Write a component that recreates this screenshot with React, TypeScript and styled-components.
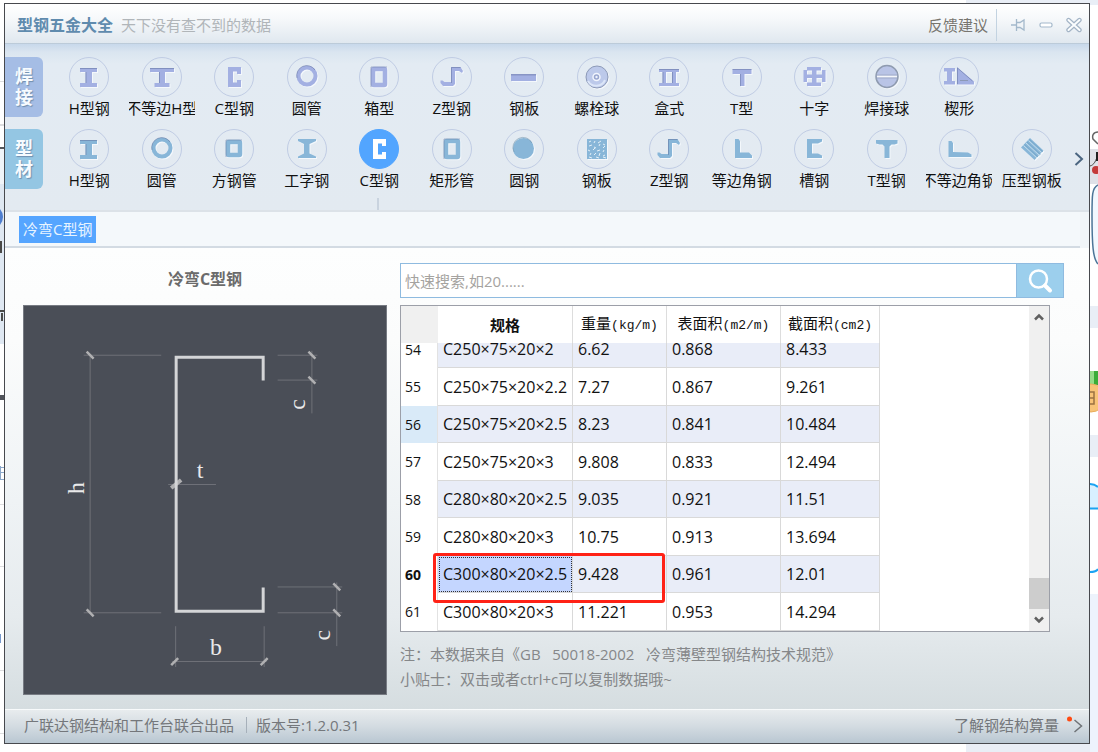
import React, { useLayoutEffect, useRef } from 'react';
import styled, { createGlobalStyle } from 'styled-components';

const GlobalStyle = createGlobalStyle`
  * { box-sizing: border-box; }
  body {
    margin: 0;
    background: #ffffff;
    font-family: "Open Sans", "Noto Sans CJK SC", sans-serif;
    font-size: 15px;
    line-height: 20px;
    color: #111111;
  }
  button, input { font: inherit; color: inherit; margin: 0; }
  button { border: 0; padding: 0; background: none; cursor: pointer; }
  a { color: inherit; text-decoration: none; }
`;

const Desktop = styled.div`
  display: grid;
  grid-template-columns: 4px minmax(0, 1fr) 8px;
  min-height: 100vh;
  background: linear-gradient(90deg, #ffffff 88%, #e9eef6 88%);
`;

const Backdrop = styled.div`
  height: 752px;
  overflow: hidden;
  svg { display: block; }
`;

const Center = styled.div`
  display: flex;
  flex-direction: column;
  padding: 3px 0 8px;
`;

const Window = styled.main`
  flex: 1;
  display: flex;
  flex-direction: column;
  border: 1px solid #47494e;
  background: #f1f5f8;
`;

const TitleBar = styled.header`
  display: flex;
  align-items: center;
  height: 40px;
  padding: 3px 3px 0 12px;
  background: linear-gradient(#ffffff, #f7f9fb 35%, #e0e8ef);
  border-bottom: 1px solid #bccbd9;
`;

const AppName = styled.h1`
  margin: 0 8px 0 0;
  font-size: 16px;
  line-height: 20px;
  font-weight: 700;
  color: #5f8bae;
`;

const Slogan = styled.span`
  flex: 1;
  color: #b0b5b9;
`;

const Feedback = styled.a`
  color: #77756f;
  padding-right: 8px;
`;

const WindowControls = styled.div`
  display: flex;
  align-items: center;
  height: 32px;
  gap: 4px;
  padding-left: 9px;
  border-left: 1px solid #c3d3e1;
  button { width: 24px; height: 24px; }
  svg { display: block; margin: 0 auto; }
`;

const Ribbon = styled.nav`
  position: relative;
  display: flex;
  height: 168px;
  padding-top: 13px;
  background: linear-gradient(#c8d9eb, #dae5f0 8px, #e3ebf3 20px, #e3eaf1);
  border-bottom: 2px solid #dce2e8;
`;

const RibbonRows = styled.div`
  flex: 1;
  display: flex;
  flex-direction: column;
  gap: 12px;
`;

const RibbonRow = styled.section`
  display: flex;
  height: 60px;
`;

const GroupTab = styled.h2<{ $color: string }>`
  display: flex;
  align-items: center;
  justify-content: center;
  width: 38px;
  height: 60px;
  margin: 0 10px 0 0;
  padding: 0 8px;
  border-radius: 0 6px 6px 0;
  background: ${(p) => p.$color};
  color: #f7fbff;
  font-size: 18px;
  line-height: 21px;
  font-weight: 700;
  text-align: center;
  text-shadow: 1px 1px 1px #6f8fb0;
`;

const ShapeGrid = styled.div`
  flex: 1;
  display: grid;
  grid-template-columns: repeat(14, minmax(0, 1fr));
`;

const ShapeButton = styled.button`
  display: flex;
  flex-direction: column;
  align-items: center;
  height: 62px;
`;

const IconDisc = styled.span<{ $active?: boolean; $tone: string }>`
  width: 40px;
  height: 40px;
  flex: none;
  border-radius: 50%;
  border: 1px solid ${(p) => (p.$active ? '#52a5ff' : '#c0cce4')};
  background: ${(p) => (p.$active ? '#52a5ff' : 'transparent')};
  svg {
    display: block;
    margin: -1px;
    filter: ${(p) => (p.$active ? 'none' : 'drop-shadow(1px 1px 0 #f4f8fc)')};
    color: ${(p) => (p.$active ? '#ffffff' : p.$tone)};
  }
`;

const ShapeLabel = styled.span`
  display: flex;
  justify-content: center;
  width: 66px;
  margin-top: 1px;
  overflow: hidden;
  white-space: nowrap;
`;

const NextButton = styled.button`
  width: 21px;
  height: 24px;
  margin-top: 90px;
  svg { display: block; margin: 0 auto; }
`;

const ActiveMarker = styled.i`
  position: absolute;
  left: 34.3%;
  bottom: 0;
  width: 2px;
  height: 12px;
  background: #c9d3df;
`;

const SubTabs = styled.div`
  display: flex;
  align-items: center;
  height: 36px;
  margin-right: 9px;
  padding-left: 14px;
  background: #f4f8fb;
  border-bottom: 2px solid #d3dbe3;
`;

const SubTab = styled.button`
  height: 27px;
  padding: 0 4px;
  background: #55a5ff;
  color: #e8f4ff;
`;

const Content = styled.div`
  flex: 1;
  display: grid;
  grid-template-columns: 364px minmax(0, 1fr);
  gap: 13px;
  padding: 15px 25px 8px 18px;
  background: linear-gradient(#fdfefe, #fbfcfc 20%, #eff3f5 55%, #e6ebee 80%, #d5dde0);
`;

const FigureBox = styled.figure`
  margin: 0;
  figcaption {
    height: 42px;
    padding-top: 6px;
    font-size: 16px;
    font-weight: 700;
    text-align: center;
    color: #6b6b6b;
  }
  svg { display: block; width: 100%; border: 1px solid #777b83; background: #4a4e57; }
`;

const DataPane = styled.section`
  min-width: 0;
`;

const SearchForm = styled.form`
  display: flex;
  height: 35px;
  border: 1px solid #8fbbe0;
  background: #ffffff;
  input {
    flex: 1;
    min-width: 0;
    border: 0;
    padding: 0 4px;
    background: none;
    outline: none;
  }
  input::placeholder { color: #a5a3a0; opacity: 1; }
  button { width: 47px; background: #9ccfed; border-left: 1px solid #8fbbe0; }
  svg { display: block; margin: 0 auto; }
`;

const TableFrame = styled.div`
  position: relative;
  display: flex;
  height: 327px;
  margin: 7px 14px 12px 0;
  border: 1px solid #9c9fa8;
  background: #ffffff;
`;

const ScrollArea = styled.div`
  flex: 1;
  overflow: hidden;
`;

const Table = styled.table`
  table-layout: fixed;
  width: 479px;
  border-collapse: separate;
  border-spacing: 0;
`;

const ColumnHead = styled.th<{ $bold?: boolean; $corner?: boolean }>`
  position: sticky;
  top: 0;
  z-index: 1;
  height: 37px;
  padding: 0;
  background: ${(p) => (p.$corner ? '#f0f0f0' : '#ffffff')};
  border-right: 1px solid ${(p) => (p.$corner ? '#f0f0f0' : '#dddddd')};
  font-weight: ${(p) => (p.$bold ? 700 : 400)};
  white-space: nowrap;
`;

const Unit = styled.span`
  font-family: "Liberation Mono", monospace;
  font-size: 13px;
`;

const DataRow = styled.tr<{ $odd: boolean }>`
  height: ${(p) => (p.$odd ? 38 : 37)}px;
  background: ${(p) => (p.$odd ? '#ffffff' : '#e9edf8')};
`;

const RowNumber = styled.th<{ $state?: string }>`
  padding: 0 0 0 4px;
  text-align: left;
  font-size: 14px;
  font-weight: ${(p) => (p.$state === 'current' ? 700 : 400)};
  background: ${(p) => (p.$state === 'hover' ? '#d9eaf8' : '#ffffff')};
  border-right: 1px solid #e2e2e2;
`;

const Cell = styled.td<{ $selected?: boolean }>`
  padding: 0 0 0 5px;
  font-size: 16px;
  white-space: nowrap;
  border-right: 1px solid #d9d9d9;
  border-bottom: 1px solid #d9d9d9;
  background: ${(p) => (p.$selected ? '#c4d6ff' : 'transparent')};
  outline: ${(p) => (p.$selected ? '1px dotted #333333' : 'none')};
  outline-offset: -2px;
`;

const ScrollBar = styled.div`
  display: flex;
  flex-direction: column;
  width: 20px;
  background: #f0f0f0;
  button { height: 22px; }
  svg { display: block; margin: 0 auto; }
`;

const ScrollTrack = styled.div`
  flex: 1;
  display: flex;
  align-items: flex-end;
`;

const ScrollThumb = styled.div`
  width: 100%;
  height: 31px;
  background: #cdcdcd;
`;

const Highlight = styled.div`
  position: absolute;
  left: 32px;
  top: 247px;
  width: 232px;
  height: 50px;
  border: 3px solid #ff2216;
  border-radius: 3px;
  z-index: 2;
`;

const Note = styled.p`
  margin: 0 0 5px;
  color: #858789;
  white-space: pre;
`;

const StatusBar = styled.footer`
  display: flex;
  align-items: center;
  height: 34px;
  padding: 0 6px 3px 19px;
  border-top: 1px solid #f7fafb;
  background: linear-gradient(#e8ecee, #d3dbe1 50%, #b9c7d2);
  color: #74777b;
`;

const Version = styled.span`
  flex: 1;
  margin-left: 12px;
  padding-left: 9px;
  line-height: 16px;
  border-left: 1px solid #a6b0ba;
`;

const LearnMore = styled.a`
  display: flex;
  align-items: center;
  gap: 8px;
  svg { display: block; }
`;

const Steel = ({ children }: { children: React.ReactNode }) => (
  <svg width="40" height="40" viewBox="0 0 40 40" fill="currentColor" stroke="none">
    {children}
  </svg>
);

const Tube = (p: { x: number; y: number; w: number; h: number }) => (
  <rect x={p.x} y={p.y} width={p.w} height={p.h} rx="1" fill="none" stroke="currentColor" strokeWidth="4.5" />
);

const icons: Record<string, React.ReactNode> = {
  h: <><path d="M11 11h17v4h-5v11h5v4H11v-4h5.500V15H11z" /><path d="M11 11h17v1H11zM16.500 15h1v11h-1z" fill="#5f6f9c" opacity=".5" /></>,
  uneven: <><path d="M8 11h24v4h-9v11h4.500v4h-15v-4h4.500V15H8z" /><path d="M8 11h24v1H8zM17 15h1v11h-1z" fill="#5f6f9c" opacity=".5" /></>,
  c: <path d="M14 10h13v7h-4v-2.500h-4v11h4V23h4v7H14z" />,
  ring: <><circle cx="20" cy="19" r="8.500" fill="none" stroke="currentColor" strokeWidth="4" /><path d="M10 21a10 10 0 0 1 18-8" fill="none" stroke="#5f6f9c" strokeOpacity=".5" /></>,
  box: <><Tube x={14} y={12} w={12} h={16} /><path d="M12 30V10h16" fill="none" stroke="#5f6f9c" strokeOpacity=".45" /></>,
  square: <><Tube x={14} y={13} w={12} h={13} /><path d="M12 28V11h16" fill="none" stroke="#5f6f9c" strokeOpacity=".45" /></>,
  z: <><path d="M19 10h9.500l2.500 4-1 2-3-2h-4v13l-2 2H11l-2.500-3v-2.500h2l2 1.500h6.500z" /><path d="M19.500 26V10.500h9" fill="none" stroke="#5f6f9c" strokeOpacity=".5" /></>,
  plate: <><path d="M7 17h25v7H7z" /><path d="M7 17h25v1.500H7z" fill="#5f6f9c" opacity=".4" /></>,
  bolt: <><circle cx="20" cy="20" r="11" fill="#bcc9ea" stroke="#8c99b6" /><path d="M11 24a9.500 9.500 0 0 0 17-1" fill="none" stroke="#dce6f8" strokeWidth="2" /><circle cx="19.500" cy="20" r="3.500" fill="#98a6cf" stroke="#f1f5fd" strokeWidth="1.500" /><circle cx="19.500" cy="20" r="1.200" fill="#eef3fc" /></>,
  twin: <><path d="M10 12h20v3h-3v11h3v3H10v-3h3.500V15H10zm7 3v11h6V15z" fillRule="evenodd" /><path d="M10 12h20v1H10zM13.500 15h1v11h-1zM23 15h1v11h-1z" fill="#5f6f9c" opacity=".5" /></>,
  t: <><path d="M10.500 12h19v5H22.500v12h-4.500V17h-7.500z" /><path d="M10.500 12h19v1h-19zM18 17h1v12h-1z" fill="#5f6f9c" opacity=".45" /></>,
  cross: <path d="M13 10h14v3.500h-4.500v4H28V13h3.500v12H28v-4h-5.500v4.500H27V29H13v-3.500h5V21h-5v4H9.500V13H13v4.500h5v-4h-5z" />,
  ball: <><circle cx="20" cy="19.500" r="11" fill="#b9c4e6" stroke="#8f9bb0" strokeWidth="1.500" /><path d="M10 19.500h20" stroke="#f5f7fa" strokeWidth="2" /><path d="M9.500 18h21M9.500 21h21" stroke="#9aa6c0" strokeWidth=".8" /></>,
  wedge: <><path d="M5 11h11v3.500h-3V24h3v3.500H5V24h3v-9.500H5z" /><path d="M18 10l17 14.500v3H18z" /><path d="M21 23.500h8" stroke="#8c99b6" /><path d="M18.500 27V11l15 13" fill="none" stroke="#5f6f9c" strokeOpacity=".5" /></>,
  beam: <path d="M11 10h18v2l-6.500 3v9.500l6.500 3V29H11v-1.500l6-3V15l-6-3z" />,
  disc: <><circle cx="19.500" cy="19.500" r="10.500" /><path d="M10 23a10 10 0 0 1 18-9" fill="none" stroke="#5f86a0" strokeOpacity=".5" /></>,
  checker: <><path d="M10 10h20v20H10z" /><path d="M12 13l2-1m3 2l1-2m3 2l3-2m2 3l2 1M12 17l3-1m2 2l2 1m3-2l1-2m3 4l2-2M11 21l2 1m3-1l2-2m2 3l3-1m3 2l1-2M13 26l1-2m3 2l2-2m3 3l1-3m3 3l2-1M12 28l3 1m4-1l3 1m4-1l3 1" fill="none" stroke="#e4f0f7" strokeWidth="1" /></>,
  angle: <path d="M13 10h3.500l1.500 2v11.500h9l3 3V29H13z" />,
  channel: <path d="M13 10h15v2.500l-4 2h-6v10h6l4 2V29H13z" />,
  tee: <path d="M9 11h21.500v3.500l-3 1h-3l-2 2V29h-5V17.500l-2-2h-3l-3.500-1z" />,
  angle2: <path d="M9.500 12h3l1.500 2v9l15 .5 3.500 2V28h-23z" />,
  deck: <><path d="M18 9l13.500 12.500-9 9.500L9 18.500z" /><path d="M11.500 16.500L25 29M14 14l13.500 12.500M16.500 11.500L30 24" fill="none" stroke="#c3dcec" strokeWidth="1" /><path d="M12.500 15.500L26 28M15 13l13.500 12.500M17.500 10.500L31 23" fill="none" stroke="#6b9cbf" strokeWidth="1" strokeOpacity=".6" /></>,
};

type Shape = { name: string; icon: string; active?: boolean };

const welded: Shape[] = [
  { name: 'H型钢', icon: 'h' }, { name: '不等边H型', icon: 'uneven' }, { name: 'C型钢', icon: 'c' },
  { name: '圆管', icon: 'ring' }, { name: '箱型', icon: 'box' }, { name: 'Z型钢', icon: 'z' },
  { name: '钢板', icon: 'plate' }, { name: '螺栓球', icon: 'bolt' }, { name: '盒式', icon: 'twin' },
  { name: 'T型', icon: 't' }, { name: '十字', icon: 'cross' }, { name: '焊接球', icon: 'ball' },
  { name: '楔形', icon: 'wedge' },
];

const profiles: Shape[] = [
  { name: 'H型钢', icon: 'h' }, { name: '圆管', icon: 'ring' }, { name: '方钢管', icon: 'square' },
  { name: '工字钢', icon: 'beam' }, { name: 'C型钢', icon: 'c', active: true }, { name: '矩形管', icon: 'box' },
  { name: '圆钢', icon: 'disc' }, { name: '钢板', icon: 'checker' }, { name: 'Z型钢', icon: 'z' },
  { name: '等边角钢', icon: 'angle' }, { name: '槽钢', icon: 'channel' }, { name: 'T型钢', icon: 'tee' },
  { name: '不等边角钢', icon: 'angle2' }, { name: '压型钢板', icon: 'deck' },
];

const rows: [number, string, string, string, string][] = [
  [54, 'C250×75×20×2', '6.62', '0.868', '8.433'],
  [55, 'C250×75×20×2.2', '7.27', '0.867', '9.261'],
  [56, 'C250×75×20×2.5', '8.23', '0.841', '10.484'],
  [57, 'C250×75×20×3', '9.808', '0.833', '12.494'],
  [58, 'C280×80×20×2.5', '9.035', '0.921', '11.51'],
  [59, 'C280×80×20×3', '10.75', '0.913', '13.694'],
  [60, 'C300×80×20×2.5', '9.428', '0.961', '12.01'],
  [61, 'C300×80×20×3', '11.221', '0.953', '14.294'],
];

function ShapeRow({ title, color, tone, shapes }: { title: string; color: string; tone: string; shapes: Shape[] }) {
  return (
    <RibbonRow>
      <GroupTab $color={color}>{title}</GroupTab>
      <ShapeGrid>
        {shapes.map((s) => (
          <ShapeButton key={s.name} type="button" aria-pressed={!!s.active}>
            <IconDisc $active={s.active} $tone={tone}><Steel>{icons[s.icon]}</Steel></IconDisc>
            <ShapeLabel>{s.name}</ShapeLabel>
          </ShapeButton>
        ))}
      </ShapeGrid>
    </RibbonRow>
  );
}

function SectionDrawing() {
  return (
    <svg viewBox="23 305 364 390" role="img" aria-label="冷弯C型钢">
      <g stroke="#6f7178" strokeWidth="1" fill="none">
        <path d="M83 354.500H161M83 613.500H161M89.500 354V613" />
        <path d="M278 354.500H318M278 379.500H318M312.500 350V413" />
        <path d="M278 587.500H343M278 613.500H343M337.500 583V647" />
        <path d="M175.500 627V668M264.500 627V668M172 662.500H267M168 484.500H216" />
      </g>
      <g stroke="#b0b0b2" strokeWidth="2.500">
        <path d="M86 351l7 7M86 610l7 7M309 351l7 7M309 376l7 7M334 584l7 7M334 610l7 7M171 666l7-7M261 666l7-7" />
        <path d="M171 488l10-8" strokeWidth="4" />
      </g>
      <path d="M263.500 380V356.500H176V612H263.500V588" fill="none" stroke="#d4d5d7" strokeWidth="3" />
      <g fill="#e9e9ea" fontFamily="Liberation Serif, serif" fontSize="24" textAnchor="middle">
        <text x="200" y="478">t</text>
        <text x="216" y="656">b</text>
        <text transform="translate(83 488) rotate(-90)">h</text>
        <text transform="translate(306 404) rotate(-90)">c</text>
        <text transform="translate(331 636) rotate(-90)">c</text>
      </g>
    </svg>
  );
}

const LeftBackdrop = () => (
  <svg width="4" height="752" aria-hidden="true">
    <path d="M0 147h4v2H0z" fill="#55585d" />
    <path d="M0 149h4v35H0z" fill="#f0f4f8" />
    <path d="M0 184h4v160H0z" fill="#dfe8f2" />
    <circle cx="-9" cy="217" r="12" fill="#4f7fd0" />
    <path d="M0 241h2v12H0zM0 310h4v2H0zM1 313h2v8H1z" fill="#4a4a48" />
    <path d="M0 81h4v1H0zM0 124h4v2H0zM0 504h4v1H0zM0 566h4v1H0zM0 670h4v1H0zM0 733h4v1H0z" fill="#dddddf" />
    <path d="M0 395h4v5H0z" fill="#50535a" />
    <path d="M0 466h1v14H0zM0 467h4v1H0zM0 472h4v1H0zM0 479h4v1H0z" fill="#8ca8ca" />
    <path d="M0 634h1v9H0z" fill="#7799cc" />
  </svg>
);

const RightBackdrop = () => (
  <svg width="8" height="752" aria-hidden="true">
    <path d="M0 0h8v752H0z" fill="#e9eef6" />
    <path d="M0 5h8v301H0zM0 328h8v107H0zM0 457h8v137H0z" fill="#ffffff" />
    <path d="M0 594h8v158H0z" fill="#edf3fc" />
    <path d="M0 149h8v35H0z" fill="#dfe1e8" />
    <path d="M8 132c-5 0-6 4-5 7l5 5" fill="#ffffff" stroke="#666666" strokeWidth="1.500" />
    <path d="M0 166c4-1 6-5 8-12" fill="none" stroke="#444444" />
    <path d="M6 152h2v9H6z" fill="#222222" />
    <circle cx="6" cy="170" r="4" fill="#c43a3a" />
    <path d="M8 185c-6 3-6 10-6 30 0 30 1 44 6 49" fill="#f2f8ff" stroke="#4c7598" strokeWidth="1.500" />
    <path d="M0 371h8v14H0z" fill="#3cac38" />
    <path d="M0 371h4v14H0z" fill="#95dc88" />
    <circle cx="1" cy="398" r="14" fill="#f8c378" stroke="#e8ad5c" />
    <path d="M0 392h4v12H0M0 398h4" fill="none" stroke="#9a7242" strokeWidth="1.500" />
    <path d="M0 484c4 0 7 2 8 3v22H0z" fill="#d8f0ff" />
    <path d="M0 484c4 0 7 2 8 3M0 508.500h8M0 572c4 0 7-1 8-3" fill="none" stroke="#1ba3f2" strokeWidth="2" />
  </svg>
);

export default function App() {
  const scroller = useRef<HTMLDivElement>(null);
  useLayoutEffect(() => {
    if (scroller.current) scroller.current.scrollTop = scroller.current.scrollHeight;
  }, []);

  return (
    <>
      <GlobalStyle />
      <Desktop>
        <Backdrop><LeftBackdrop /></Backdrop>
        <Center>
          <Window>
            <TitleBar>
              <AppName>型钢五金大全</AppName>
              <Slogan>天下没有查不到的数据</Slogan>
              <Feedback href="#feedback">反馈建议</Feedback>
              <WindowControls>
                <button type="button" aria-label="置顶">
                  <svg width="16" height="16" viewBox="0 0 16 16" fill="none" stroke="#a3b8cb" strokeWidth="1.300">
                    <path d="M1 8h5M6.500 2v12M7 5.500h3l4-2.500v10l-4-2.500H7" />
                  </svg>
                </button>
                <button type="button" aria-label="最小化">
                  <svg width="14" height="14" viewBox="0 0 14 14" fill="#ffffff" stroke="#a3b8cb" strokeWidth="1.200">
                    <rect x="1" y="5" width="12" height="4" rx="1.500" />
                  </svg>
                </button>
                <button type="button" aria-label="关闭">
                  <svg width="18" height="16" viewBox="0 0 18 16" fill="none" strokeLinecap="round">
                    <path d="M3.500 3l11 10M14.500 3l-11 10" stroke="#a3b4c6" strokeWidth="4.400" />
                    <path d="M3.500 3l11 10M14.500 3l-11 10" stroke="#fbfdfe" strokeWidth="2" />
                  </svg>
                </button>
              </WindowControls>
            </TitleBar>

            <Ribbon>
              <RibbonRows>
                <ShapeRow title="焊接" color="#a5bde5" tone="#a3b0e2" shapes={welded} />
                <ShapeRow title="型材" color="#94c6e3" tone="#88b6d8" shapes={profiles} />
              </RibbonRows>
              <NextButton type="button" aria-label="下一页">
                <svg width="10" height="16" viewBox="0 0 10 16" fill="none" stroke="#4b6580" strokeWidth="2">
                  <path d="M1.500 2l6.500 6-6.500 6" />
                </svg>
              </NextButton>
              <ActiveMarker />
            </Ribbon>

            <SubTabs><SubTab type="button">冷弯C型钢</SubTab></SubTabs>

            <Content>
              <FigureBox>
                <figcaption>冷弯C型钢</figcaption>
                <SectionDrawing />
              </FigureBox>
              <DataPane>
                <SearchForm onSubmit={(e) => e.preventDefault()}>
                  <input type="text" aria-label="快速搜索" placeholder="快速搜索,如20......" />
                  <button type="submit" aria-label="搜索">
                    <svg width="26" height="26" viewBox="0 0 26 26" fill="none" stroke="#ffffff">
                      <circle cx="11.500" cy="11" r="8.500" strokeWidth="2.500" />
                      <path d="M18 17.500l5 5" strokeWidth="4" strokeLinecap="round" />
                    </svg>
                  </button>
                </SearchForm>
                <TableFrame>
                  <ScrollArea ref={scroller}>
                    <Table>
                      <colgroup>
                        <col style={{ width: 37 }} /><col style={{ width: 135 }} /><col style={{ width: 94 }} />
                        <col style={{ width: 114 }} /><col style={{ width: 99 }} />
                      </colgroup>
                      <thead>
                        <tr>
                          <ColumnHead $corner />
                          <ColumnHead $bold>规格</ColumnHead>
                          <ColumnHead>重量<Unit>(kg/m)</Unit></ColumnHead>
                          <ColumnHead>表面积<Unit>(m2/m)</Unit></ColumnHead>
                          <ColumnHead>截面积<Unit>(cm2)</Unit></ColumnHead>
                        </tr>
                      </thead>
                      <tbody>
                        {rows.map(([n, ...cells]) => (
                          <DataRow key={n} $odd={n % 2 === 1}>
                            <RowNumber scope="row" $state={n === 60 ? 'current' : n === 56 ? 'hover' : undefined}>{n}</RowNumber>
                            {cells.map((c, i) => (
                              <Cell key={i} $selected={n === 60 && i === 0}>{c}</Cell>
                            ))}
                          </DataRow>
                        ))}
                      </tbody>
                    </Table>
                  </ScrollArea>
                  <ScrollBar>
                    <button type="button" aria-label="向上滚动">
                      <svg width="10" height="8" viewBox="0 0 10 8" fill="none" stroke="#606060" strokeWidth="2.500"><path d="M1 6.500l4-4 4 4" /></svg>
                    </button>
                    <ScrollTrack><ScrollThumb /></ScrollTrack>
                    <button type="button" aria-label="向下滚动">
                      <svg width="10" height="8" viewBox="0 0 10 8" fill="none" stroke="#606060" strokeWidth="2.500"><path d="M1 1.500l4 4 4-4" /></svg>
                    </button>
                  </ScrollBar>
                  <Highlight />
                </TableFrame>
                <Note>{'注：本数据来自《GB   50018-2002   冷弯薄壁型钢结构技术规范》'}</Note>
                <Note>小贴士：双击或者ctrl+c可以复制数据哦~</Note>
              </DataPane>
            </Content>

            <StatusBar>
              <span>广联达钢结构和工作台联合出品</span>
              <Version>版本号:1.2.0.31</Version>
              <LearnMore href="#learn">
                <span>了解钢结构算量</span>
                <svg width="16" height="20" viewBox="0 0 16 20" fill="none">
                  <circle cx="2.500" cy="4" r="2.500" fill="#ff4a12" />
                  <path d="M7.500 5l7 6-7 6" stroke="#6f7377" strokeWidth="1.500" />
                </svg>
              </LearnMore>
            </StatusBar>
          </Window>
        </Center>
        <Backdrop><RightBackdrop /></Backdrop>
      </Desktop>
    </>
  );
}
